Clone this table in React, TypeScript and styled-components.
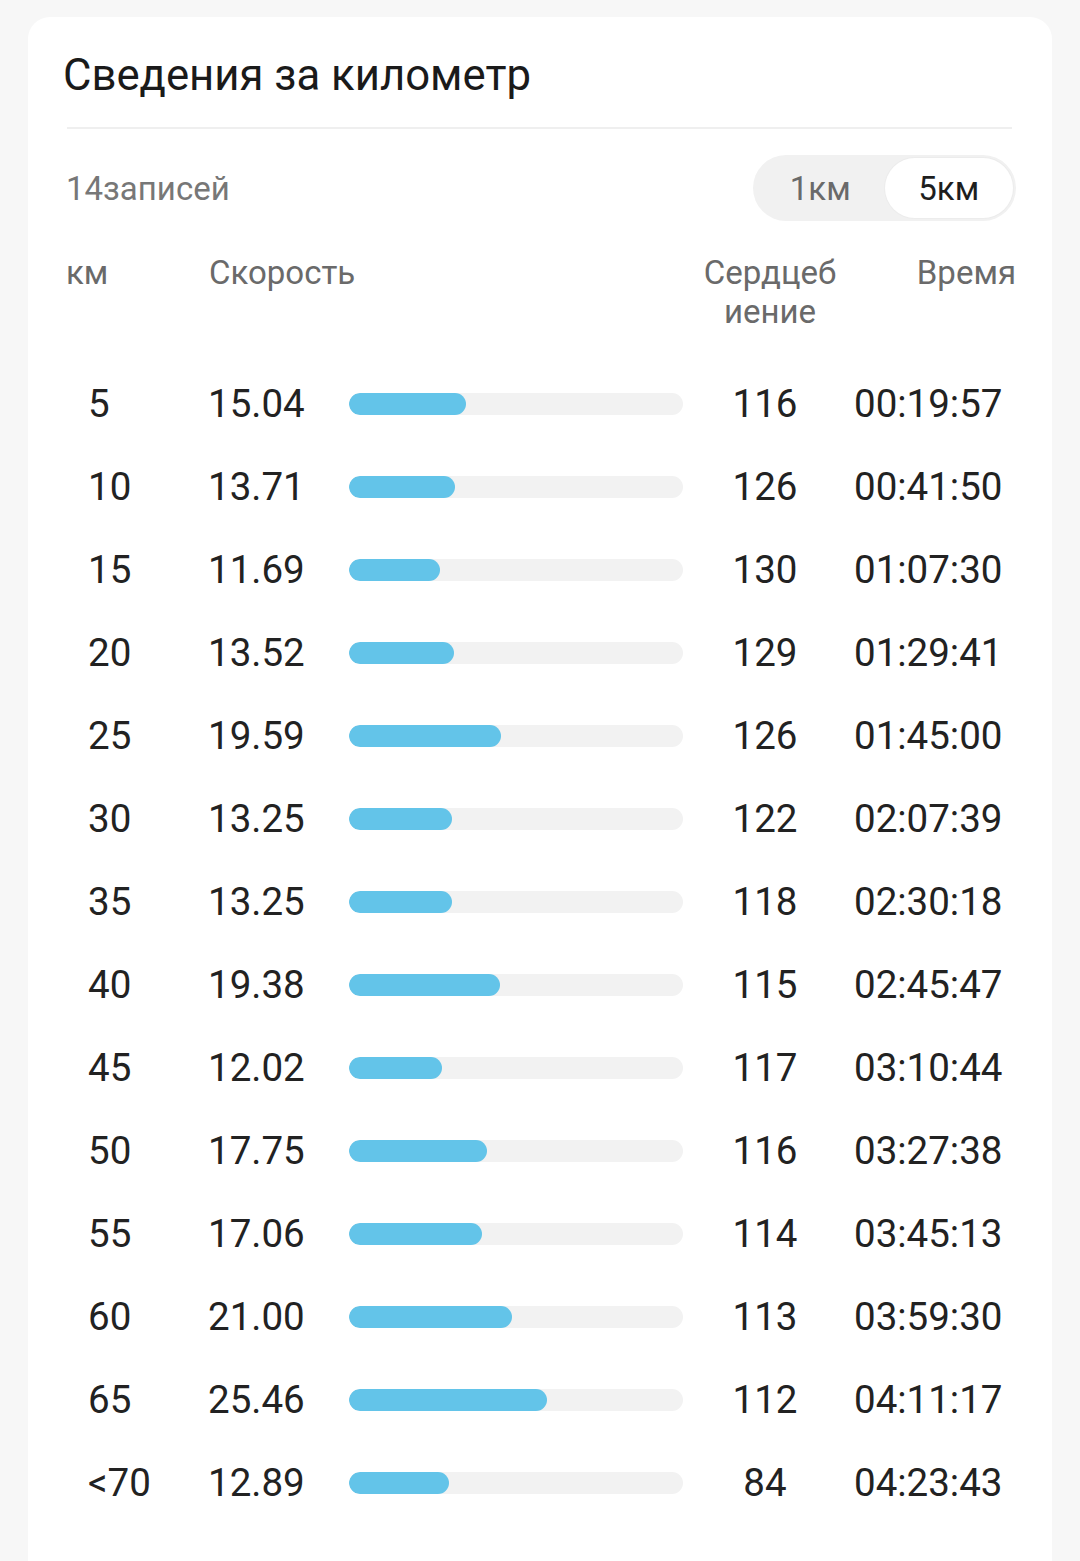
import React, { FC } from "react";
import styled, { createGlobalStyle } from "styled-components";

const GlobalStyle = createGlobalStyle`
	html, body {
		margin: 0;
		padding: 0;
		background: #f7f7f7;
		font-family: Roboto, "Noto Sans", "Liberation Sans", sans-serif;
	}
`;

interface Split {
	km: string;
	speed: string;
	heart: string;
	time: string;
}

const splits: Split[] = [
	{ km: "5", speed: "15.04", heart: "116", time: "00:19:57" },
	{ km: "10", speed: "13.71", heart: "126", time: "00:41:50" },
	{ km: "15", speed: "11.69", heart: "130", time: "01:07:30" },
	{ km: "20", speed: "13.52", heart: "129", time: "01:29:41" },
	{ km: "25", speed: "19.59", heart: "126", time: "01:45:00" },
	{ km: "30", speed: "13.25", heart: "122", time: "02:07:39" },
	{ km: "35", speed: "13.25", heart: "118", time: "02:30:18" },
	{ km: "40", speed: "19.38", heart: "115", time: "02:45:47" },
	{ km: "45", speed: "12.02", heart: "117", time: "03:10:44" },
	{ km: "50", speed: "17.75", heart: "116", time: "03:27:38" },
	{ km: "55", speed: "17.06", heart: "114", time: "03:45:13" },
	{ km: "60", speed: "21.00", heart: "113", time: "03:59:30" },
	{ km: "65", speed: "25.46", heart: "112", time: "04:11:17" },
	{ km: "<70", speed: "12.89", heart: "84", time: "04:23:43" },
];

const MAX_SPEED = 43;

const Card = styled.div`
	margin: 17px 28px 0 28px;
	padding: 34px 36px 40px 38px;
	background: #ffffff;
	border-radius: 22px;
	min-height: 1600px;
	box-sizing: border-box;
`;

const Title = styled.h2`
	margin: 0 0 0 -3px;
	font-size: 43.7px;
	line-height: 48px;
	font-weight: 400;
	color: #1a1a1a;
`;

const Divider = styled.div`
	margin: 28px 4px 0 1px;
	height: 2px;
	background: #efefef;
`;

const Toolbar = styled.div`
	display: flex;
	align-items: center;
	justify-content: space-between;
	margin-top: 26px;
`;

const Count = styled.span`
	font-size: 33px;
	color: #777777;
`;

const Toggle = styled.div`
	display: grid;
	grid-template-columns: 1fr 1fr;
	width: 263px;
	height: 66px;
	padding: 3px;
	box-sizing: border-box;
	border-radius: 33px;
	background: #f1f1f1;
`;

const ToggleOption = styled.div<{ active?: boolean }>`
	display: flex;
	align-items: center;
	justify-content: center;
	border-radius: 30px;
	font-size: 33px;
	color: ${({ active }) => (active ? "#1e1e1e" : "#6a6a6a")};
	background: ${({ active }) => (active ? "#ffffff" : "transparent")};
	box-shadow: ${({ active }) => (active ? "0 0 0 1px #ececec" : "none")};
`;

const HeaderRow = styled.div`
	display: grid;
	grid-template-columns: 143px 461px 200px 146px;
	margin-top: 32px;
	font-size: 33px;
	line-height: 39px;
	color: #6a6a6a;
`;

const HeaderCell = styled.div<{ align?: "left" | "center" | "right" }>`
	text-align: ${({ align = "left" }) => align};
`;

const Rows = styled.div`
	margin-top: 31px;
`;

const Row = styled.div`
	display: grid;
	grid-template-columns: 120px 141px 334px 164px auto;
	align-items: center;
	height: 83px;
	padding-left: 22px;
	font-size: 38.5px;
	color: #222222;
`;

const Value = styled.span<{ center?: boolean }>`
	text-align: ${({ center }) => (center ? "center" : "left")};
`;

const Track = styled.div`
	height: 22px;
	border-radius: 11px;
	background: #f2f2f2;
	overflow: hidden;
`;

const Fill = styled.div`
	height: 100%;
	border-radius: 11px;
	background: #63c4e9;
`;

const TimeValue = styled.span`
	padding-left: 7px;
`;

const SplitRow: FC<{ split: Split }> = ({ split }) => (
	<Row>
		<Value>{split.km}</Value>
		<Value>{split.speed}</Value>
		<Track>
			<Fill style={{ width: `${(parseFloat(split.speed) / MAX_SPEED) * 100}%` }} />
		</Track>
		<Value center>{split.heart}</Value>
		<TimeValue>{split.time}</TimeValue>
	</Row>
);

const App: FC = () => {
	return (
		<>
			<GlobalStyle />
			<Card>
				<Title>Сведения за километр</Title>
				<Divider />
				<Toolbar>
					<Count>14записей</Count>
					<Toggle>
						<ToggleOption>1км</ToggleOption>
						<ToggleOption active>5км</ToggleOption>
					</Toggle>
				</Toolbar>
				<HeaderRow>
					<HeaderCell>км</HeaderCell>
					<HeaderCell>Скорость</HeaderCell>
					<HeaderCell align="center">
						Сердцеб
						<br />
						иение
					</HeaderCell>
					<HeaderCell align="right">Время</HeaderCell>
				</HeaderRow>
				<Rows>
					{splits.map((s) => (
						<SplitRow key={s.km} split={s} />
					))}
				</Rows>
			</Card>
		</>
	);
};

export default App;
